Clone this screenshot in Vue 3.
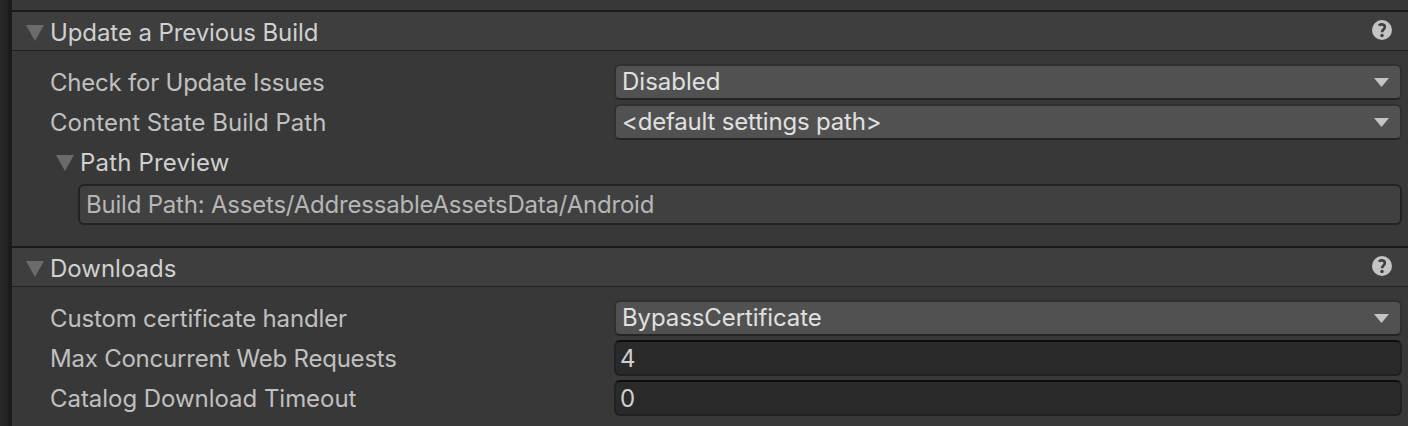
<script setup>
const sections = [
  {
    title: 'Update a Previous Build',
    spacing: -0.09,
    rows: [
      { label: 'Check for Update Issues', kind: 'select', value: 'Disabled', spacing: -0.22, valueSpacing: 0 },
      { label: 'Content State Build Path', kind: 'select', value: '<default settings path>', spacing: 0.04, valueSpacing: -0.19 },
    ],
    preview: 'Build Path: Assets/AddressableAssetsData/Android',
  },
  {
    title: 'Downloads',
    spacing: 0,
    rows: [
      { label: 'Custom certificate handler', kind: 'select', value: 'BypassCertificate', spacing: -0.15, valueSpacing: -0.1 },
      { label: 'Max Concurrent Web Requests', kind: 'input', value: '4', spacing: -0.22, valueSpacing: 0 },
      { label: 'Catalog Download Timeout', kind: 'input', value: '0', spacing: -0.04, valueSpacing: 0 },
    ],
  },
]
const tracking = (n) => ({ letterSpacing: `${n}px` })
</script>

<template>
  <div class="window">
    <div class="gutter"></div>
    <main class="inspector">
      <section v-for="s in sections" :key="s.title" class="section">
        <header class="head">
          <svg class="fold" width="18" height="16" viewBox="0 0 18 16"><path d="M0 0H18L9 16Z" /></svg>
          <span class="title" :style="tracking(s.spacing)">{{ s.title }}</span>
          <svg class="help" width="20" height="20" viewBox="0 0 20 20">
            <circle cx="10" cy="10" r="10" fill="#c4c4c4" />
            <path d="M6.9 5.7C8 3.8 12.8 3.6 12.8 7C12.8 9.5 10 9.4 10 12.3" fill="none" stroke="#3e3e3e" stroke-width="2.6" />
            <circle cx="10" cy="15.4" r="1.75" fill="#3e3e3e" />
          </svg>
        </header>
        <div class="body">
          <div v-for="r in s.rows" :key="r.label" class="row">
            <span class="label" :style="tracking(r.spacing)">{{ r.label }}</span>
            <div :class="['field', r.kind]">
              <span class="value" :style="tracking(r.valueSpacing)">{{ r.value }}</span>
              <svg v-if="r.kind === 'select'" width="15" height="9" viewBox="0 0 15 9"><path d="M0 0H15L7.5 9Z" fill="#c4c4c4" /></svg>
            </div>
          </div>
          <template v-if="s.preview">
            <div class="row sub">
              <svg class="fold" width="18" height="16" viewBox="0 0 18 16"><path d="M0 0H18L9 16Z" /></svg>
              <span class="title" :style="tracking(0.17)">Path Preview</span>
            </div>
            <div class="box"><span :style="tracking(-0.21)">{{ s.preview }}</span></div>
          </template>
        </div>
      </section>
    </main>
  </div>
</template>

<style>
body { background: #383838; overflow: hidden; }
</style>
<style scoped>
.window { display: flex; width: 1408px; height: 426px; overflow: hidden; background: #383838; font: 400 24px/30px Inter, sans-serif; color: #c0c0c0; }
.gutter { flex: none; width: 12px; background: linear-gradient(90deg, #282828 0, #232323 7px, #1a1a1a 9px); }
.inspector { flex: 1; padding-top: 10px; }
.section { height: 236px; }
.head { box-sizing: border-box; height: 41px; display: flex; align-items: center; background: #3e3e3e; border-top: 2px solid #1a1a1a; border-bottom: 1px solid #202020; padding: 3px 16px 0 14px; }
.fold { flex: none; fill: #6b6b6b; }
.title { margin-left: 6px; color: #d0d0d0; white-space: nowrap; }
.help { margin: 0 0 5px auto; }
.body { padding-top: 13px; }
.row { display: flex; height: 36px; margin-bottom: 4px; align-items: center; }
.label { width: 564px; padding: 2px 0 0 38px; white-space: nowrap; }
.field { box-sizing: border-box; width: 788px; height: 36px; display: flex; align-items: center; justify-content: space-between; border-radius: 6px; color: #e0e0e0; }
.select { background: #515151; border: 2px solid #303030; border-bottom-color: #242424; padding: 0 11px 0 6px; }
.input { background: #2a2a2a; border: 2px solid #212121; border-top-color: #0d0d0d; padding: 2px 4px 0; color: #d0d0d0; }
.sub { box-sizing: border-box; padding: 2px 0 0 44px; }
.box { box-sizing: border-box; width: 1324px; height: 41px; margin-left: 66px; display: flex; align-items: center; border: 2px solid #232323; border-radius: 6px; background: #404040; padding: 0 6px; color: #b6b6b6; }
</style>
